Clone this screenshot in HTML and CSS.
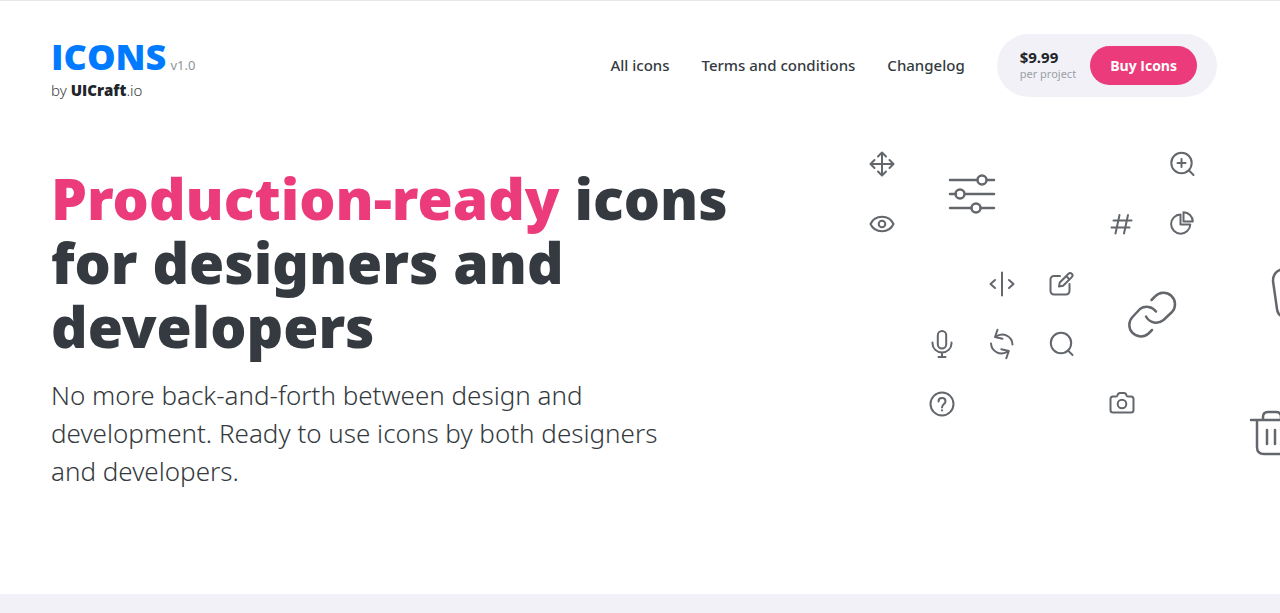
FILE: index.html
```
<!DOCTYPE html>
<html lang="en">
<head>
  <meta charset="utf-8">
  <meta name="viewport" content="width=device-width, initial-scale=1">
  <title>Icons by UICraft.io</title>
  <link rel="stylesheet" href="styles.css">
</head>
<body>
  <header class="header">
    <div class="brand">
      <div class="brand-row">
        <a class="logo" href="#">ICONS</a>
        <span class="version">v1.0</span>
      </div>
      <p class="author">by <a class="author-link" href="#"><b>UICraft</b>.io</a></p>
    </div>
    <nav class="nav">
      <a class="nav-link" href="#">All icons</a>
      <a class="nav-link" href="#">Terms and conditions</a>
      <a class="nav-link" href="#">Changelog</a>
      <div class="buy">
        <div class="price">
          <strong class="price-value">$9.99</strong>
          <span class="price-note">per project</span>
        </div>
        <button class="button" type="button">Buy Icons</button>
      </div>
    </nav>
  </header>

  <main class="hero">
    <div class="intro">
      <h1 class="title"><span class="accent">Production-ready</span> icons for designers and developers</h1>
      <p class="lead">No more back-and-forth between design and development. Ready to use icons by both designers and developers.</p>
    </div>

    <div class="icons" aria-hidden="true">
      <svg class="icon move" viewBox="0 0 28 28"><path d="M13 3v22M2 14h22M9 6.500l4-4 4 4M9 21.500l4 4 4-4M5.500 10l-4 4 4 4M20.500 10l4 4-4 4"/></svg>
      <svg class="icon eye" viewBox="0 0 28 28"><path d="M1.500 14C4 8.500 8.500 6.800 13 6.800S22 8.500 24.500 14C22 19.500 17.500 21.200 13 21.200S4 19.500 1.500 14z"/><circle cx="13" cy="14" r="3.300"/></svg>
      <svg class="icon icon-large sliders" viewBox="0 0 56 56"><path d="M5 14h27M42 14h7M5 28h6M21 28h28M5 42h21M36 42h13"/><circle cx="37" cy="14" r="4.500"/><circle cx="15" cy="28" r="4.500"/><circle cx="31" cy="42" r="4.500"/></svg>
      <svg class="icon zoom" viewBox="0 0 28 28"><circle cx="12.500" cy="13" r="10.200"/><path d="M20 20.500l4.500 4.500M8.500 13h8M12.500 9v8"/></svg>
      <svg class="icon hash" viewBox="0 0 28 28"><path d="M10.500 5L6.500 23.500M19 5l-4 18.500M4.500 10.500h18M2.500 17.500h18"/></svg>
      <svg class="icon chart" viewBox="0 0 28 28"><path d="M11.500 4.500A9.600 9.600 0 1 0 21.300 14.500H11.500z"/><path d="M14.500 2.200V11.500h9.300A9.400 9.400 0 0 0 14.500 2.200z"/></svg>
      <svg class="icon split" viewBox="0 0 28 28"><path d="M13 2.500v23M6 10l-4.500 4L6 18M20 10l4.500 4L20 18"/></svg>
      <svg class="icon edit" viewBox="0 0 28 28"><path d="M11 6H5a3.500 3.500 0 0 0-3.500 3.500V21A3.500 3.500 0 0 0 5 24.500H17A3.500 3.500 0 0 0 20.500 21V14"/><path d="M10 16.500l.8-4 8.700-8.700a2.300 2.300 0 0 1 3.300 3.300l-8.700 8.700zM17.300 6.200l3 3"/></svg>
      <svg class="icon mic" viewBox="0 0 28 28"><rect x="8.800" y="1" width="8.400" height="17.500" rx="4.200"/><path d="M3.500 12.500v1a9.500 9 0 0 0 19 0v-1M13 22.500V27M9.500 27h7"/></svg>
      <svg class="icon sync" viewBox="0 0 28 28"><path d="M23.500 14.500C23 6.500 14.500 1.500 6 7M8.500-.300L6 7l7.500 1.800M2 13.500C2.500 21.500 11 26.500 19.800 21M17.300 28.300l2.500-7.300-7.500-1.800"/></svg>
      <svg class="icon search" viewBox="0 0 28 28"><circle cx="12" cy="13" r="10.200"/><path d="M19 20.500l4.500 4.500"/></svg>
      <svg class="icon icon-large link" viewBox="0 0 56 56"><path d="M26.500 14L30 10.500A11.500 11.500 0 0 1 47 26L38.500 34A11.500 11.500 0 0 1 21 30.500M31 25.500A11.500 11.500 0 0 0 15 23L7.500 31A11.500 11.500 0 0 0 23.500 47.500L27 44"/></svg>
      <svg class="icon icon-cell pocket" viewBox="0 0 120 120"><path d="M104 15H70Q60 17 60 27L64 55Q65 62 71 63H104"/></svg>
      <svg class="icon help" viewBox="0 0 28 28"><circle cx="13" cy="14" r="11.500"/><path d="M9.500 11.500c0-4.600 7-4.600 7 0 0 2.500-3.500 2.700-3.500 6M13 20.300v.1"/></svg>
      <svg class="icon camera" viewBox="0 0 28 28"><path d="M4 6.500h3.200q1 0 1.300-1.200.5-2.300 2.500-2.300h4q2 0 2.500 2.300.3 1.200 1.300 1.200H22A2.500 2.500 0 0 1 24.500 9V20A2.500 2.500 0 0 1 22 22.500H4A2.500 2.500 0 0 1 1.500 20V9A2.500 2.500 0 0 1 4 6.500z"/><circle cx="13" cy="14" r="4.300"/></svg>
      <svg class="icon icon-large trash" viewBox="0 0 56 56"><path d="M6 14h43M12 14V41Q12 48 19 48H36Q42.500 48 42.500 41V14M18 14V11Q18 6 23 6H31Q36 6 36 11V14M22 24V38M30 24V38"/></svg>
    </div>
  </main>

  <section class="band"></section>
</body>
</html>
```

FILE: styles.css
```
*, *::before, *::after {
  box-sizing: border-box;
}

body {
  margin: 0;
  min-height: 100vh;
  display: flex;
  flex-direction: column;
  overflow-x: hidden;
  border-top: 1px solid #E6E7E9;
  background-color: #FFFFFF;
  color: #343A40;
  font-family: "Segoe UI", "Noto Sans", sans-serif;
  font-size: 15px;
}

a {
  color: inherit;
  text-decoration: none;
}

.header {
  display: flex;
  justify-content: space-between;
  align-items: center;
  padding: 29px 63px 0 51px;
}

.brand {
  padding-top: 4px;
}

.brand-row {
  display: flex;
  align-items: baseline;
  gap: 4px;
}

.logo, .author b, .button {
  font-family: "Segoe UI", "Open Sans", sans-serif;
}

.logo {
  color: #007BFF;
  font-size: 36px;
  font-weight: 900;
  line-height: 46px;
}

.version {
  color: #8E949A;
  font-size: 13px;
}

.author {
  margin: 0;
  font-weight: 300;
  line-height: 20px;
}

.author b {
  font-weight: 800;
  color: #212529;
}

.nav {
  display: flex;
  align-items: center;
  gap: 32px;
}

.nav-link {
  font-weight: 500;
}

.buy {
  display: flex;
  align-items: center;
  gap: 14px;
  padding: 12px 20px 12px 23px;
  border-radius: 32px;
  background-color: #F2F1F7;
}

.price {
  display: flex;
  flex-direction: column;
}

.price-value {
  color: #212529;
  font-size: 15px;
  line-height: 18px;
}

.price-note {
  color: #9A9FA6;
  font-size: 11px;
  line-height: 16px;
}

.button {
  height: 39px;
  padding: 0 20px;
  border: none;
  border-radius: 20px;
  background-color: #EB3B7A;
  color: #FFFFFF;
  font-size: 14px;
  font-weight: 700;
  cursor: pointer;
}

.hero {
  flex: 1;
  display: grid;
  grid-template-columns: minmax(0, 2fr) minmax(0, 1fr);
  margin-top: 34px;
}

.intro {
  padding: 32px 100px 0 51px;
}

.title {
  margin: 0;
  font-size: 57px;
  font-weight: 900;
  line-height: 64px;
}

.accent {
  color: #EB3B7A;
}

.lead {
  max-width: 640px;
  margin: 18px 0 0;
  font-size: 26px;
  font-weight: 300;
  line-height: 38px;
}

.icons {
  display: grid;
  grid-template-columns: repeat(8, 60px);
  grid-template-rows: repeat(6, 60px);
  place-items: center;
  align-content: start;
  overflow: hidden;
}

.icon {
  width: 28px;
  height: 28px;
  fill: none;
  stroke: #63676C;
  stroke-width: 2;
  stroke-linecap: round;
  stroke-linejoin: round;
  overflow: visible;
}

.icon-large {
  width: 56px;
  height: 56px;
  stroke-width: 2.5;
}

.icon-cell {
  width: 120px;
  height: 120px;
  stroke-width: 2.5;
}

.move { grid-area: 1 / 1; }
.eye { grid-area: 2 / 1; }
.sliders { grid-area: 1 / 2 / span 2 / span 2; }
.zoom { grid-area: 1 / 6; }
.hash { grid-area: 2 / 5; }
.chart { grid-area: 2 / 6; }
.split { grid-area: 3 / 3; }
.edit { grid-area: 3 / 4; }
.mic { grid-area: 4 / 2; }
.sync { grid-area: 4 / 3; }
.search { grid-area: 4 / 4; }
.link { grid-area: 3 / 5 / span 2 / span 2; }
.pocket { grid-area: 3 / 7 / span 2 / span 2; }
.help { grid-area: 5 / 2; }
.camera { grid-area: 5 / 5; }
.trash { grid-area: 5 / 7 / span 2 / span 2; }

.band {
  height: 19px;
  background-color: #F2F1F7;
}
```
